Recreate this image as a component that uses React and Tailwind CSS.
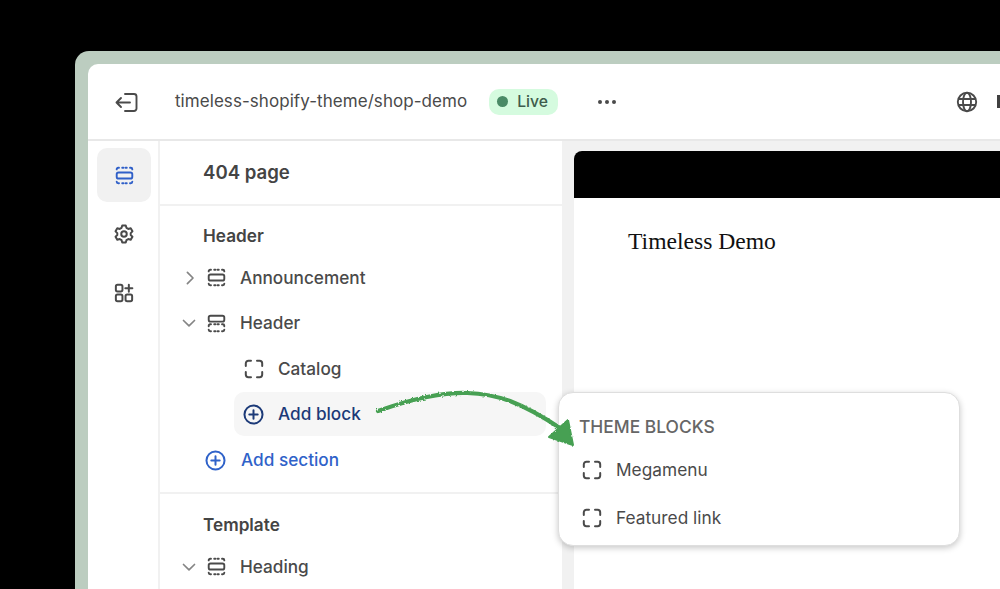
import React from 'react';

const font = { fontFamily: 'Inter, sans-serif' };

const SectionIcon = ({ className = 'text-[#4a4a4a]', size = 19 }) => (
    <svg width={size} height={size} viewBox="0 0 20 20" fill="none" stroke="currentColor" strokeWidth="2" strokeLinecap="round" className={className}>
        <rect x="1.8" y="6.8" width="16.4" height="6.4" rx="2" />
        <path d="M1.8 3.6V3.4A1.6 1.6 0 0 1 3.4 1.8H4.2M7.6 1.8H8.9M11.1 1.8H12.4M15.8 1.8H16.6A1.6 1.6 0 0 1 18.2 3.4V3.6" />
        <path d="M1.8 16.4V16.6A1.6 1.6 0 0 0 3.4 18.2H4.2M7.6 18.2H8.9M11.1 18.2H12.4M15.8 18.2H16.6A1.6 1.6 0 0 0 18.2 16.6V16.4" />
    </svg>
);

const HeaderIcon = () => (
    <svg width="19" height="19" viewBox="0 0 20 20" fill="none" stroke="#4a4a4a" strokeWidth="2" strokeLinecap="round">
        <rect x="1.8" y="1.8" width="16.4" height="6.2" rx="2" />
        <path d="M1.8 13V12.4A1.6 1.6 0 0 1 3.4 10.8H4.2M7.6 10.8H8.9M11.1 10.8H12.4M15.8 10.8H16.6A1.6 1.6 0 0 1 18.2 12.4V13" />
        <path d="M1.8 16.4V16.6A1.6 1.6 0 0 0 3.4 18.2H4.2M7.6 18.2H8.9M11.1 18.2H12.4M15.8 18.2H16.6A1.6 1.6 0 0 0 18.2 16.6V16.4" />
    </svg>
);

const BlockIcon = () => (
    <svg width="20" height="20" viewBox="0 0 20 20" fill="none" stroke="#4a4a4a" strokeWidth="2" strokeLinecap="round">
        <path d="M1.8 7V4.4A2.6 2.6 0 0 1 4.4 1.8H7M13 1.8H15.6A2.6 2.6 0 0 1 18.2 4.4V7" />
        <path d="M1.8 13V15.6A2.6 2.6 0 0 0 4.4 18.2H7M13 18.2H15.6A2.6 2.6 0 0 0 18.2 15.6V13" />
    </svg>
);

const PlusCircle = ({ color }) => (
    <svg width="21" height="21" viewBox="0 0 20 20" fill="none" stroke={color} strokeWidth="1.9" strokeLinecap="round">
        <circle cx="10" cy="10" r="8.6" />
        <path d="M10 6V14M6 10H14" />
    </svg>
);

const Chevron = ({ open }) => (
    <svg width="14" height="14" viewBox="0 0 14 14" fill="none" stroke="#858585" strokeWidth="1.7" strokeLinecap="round" strokeLinejoin="round">
        {open ? <path d="M1.5 4.5L7 9.8L12.5 4.5" /> : <path d="M5.4 1.4L11 7L5.4 12.6" />}
    </svg>
);

const Row = ({ open, icon, label }) => (
    <div className="h-[45.5px] flex items-center text-[17.2px] font-medium text-[#4a4a4a]">
        <div className="w-[19px] ml-[19px] flex justify-center"><Chevron open={open} /></div>
        <div className="w-[20px] ml-[8px] flex justify-center">{icon}</div>
        <span className="ml-[14px]">{label}</span>
    </div>
);

const App = () => {
    return (
        <div className="h-[589px] w-[1000px] overflow-hidden bg-black pl-[75px] pt-[51px] relative" style={font}>
            {/* Device frame */}
            <div className="w-[1000px] h-[600px] bg-[#bccdc0] rounded-tl-[14px] pl-[13px] pt-[13px]">
                <div className="h-full bg-white rounded-tl-[10px] flex flex-col overflow-hidden">
                    {/* Top bar */}
                    <div className="h-[77px] shrink-0 border-b-2 border-[#e8e8e8] flex items-center">
                        <svg className="ml-[26px]" width="24" height="24" viewBox="0 0 24 24" fill="none" stroke="#4a4a4a" strokeWidth="1.9" strokeLinecap="round" strokeLinejoin="round">
                            <path d="M11 4H20A2.5 2.5 0 0 1 22.5 6.5V18.5A2.5 2.5 0 0 1 20 21H11" />
                            <path d="M16 12.5H2.5M7 8L2.5 12.5L7 17" />
                        </svg>
                        <span className="ml-[37px] text-[17px] tracking-[0.06px] text-[#4a4a4a]">timeless-shopify-theme/shop-demo</span>
                        <div className="ml-[22px] h-[26px] w-[69px] rounded-[10px] bg-[#d5fbdf] flex items-center pl-[8px]">
                            <span className="w-[11px] h-[11px] rounded-full bg-[#4a8a66]" />
                            <span className="ml-[9px] text-[15.7px] font-medium text-[#3f5c4c]">Live</span>
                        </div>
                        <div className="ml-[40px] flex gap-[3px]">
                            <span className="w-[4px] h-[4px] rounded-full bg-[#4a4a4a]" />
                            <span className="w-[4px] h-[4px] rounded-full bg-[#4a4a4a]" />
                            <span className="w-[4px] h-[4px] rounded-full bg-[#4a4a4a]" />
                        </div>
                        <svg className="ml-[340px]" width="22" height="22" viewBox="0 0 22 22" fill="none" stroke="#4a4a4a" strokeWidth="1.9">
                            <circle cx="11" cy="11" r="9.2" />
                            <ellipse cx="11" cy="11" rx="4" ry="9.2" />
                            <path d="M2.4 8H19.6M2.4 14H19.6" />
                        </svg>
                        <span className="ml-[19px] w-[3px] h-[13px] bg-[#404040]" />
                    </div>

                    <div className="flex-1 flex min-h-0">
                        {/* Icon rail */}
                        <div className="w-[72px] shrink-0 border-r-2 border-[#f1f1f1] pl-[9px] pt-[7px] flex flex-col">
                            <div className="w-[54px] h-[54px] rounded-[10px] bg-[#f1f1f1] flex items-center justify-center">
                                <SectionIcon className="text-[#2f5fc8]" />
                            </div>
                            <div className="w-[54px] h-[59px] mt-[2px] flex items-center justify-center">
                                <svg width="22" height="22" viewBox="0 0 20 20" fill="none" stroke="#4a4a4a" strokeWidth="1.8" strokeLinejoin="round">
                                    <path d="M8.4 2.2H11.6L12.2 4.4L13.9 5.4L16.1 4.8L17.7 7.6L16.1 9.2V11L17.7 12.4L16.1 15.2L13.9 14.6L12.2 15.6L11.6 17.8H8.4L7.8 15.6L6.1 14.6L3.9 15.2L2.3 12.4L3.9 11V9.2L2.3 7.6L3.9 4.8L6.1 5.4L7.8 4.4Z" />
                                    <circle cx="10" cy="10" r="2.5" />
                                </svg>
                            </div>
                            <div className="w-[54px] h-[59px] flex items-center justify-center">
                                <svg width="22" height="22" viewBox="0 0 20 20" fill="none" stroke="#4a4a4a" strokeWidth="1.8" strokeLinecap="round">
                                    <rect x="2.6" y="2.6" width="6" height="6" rx="1.5" />
                                    <rect x="2.6" y="11.4" width="6" height="6" rx="1.5" />
                                    <rect x="11.4" y="11.4" width="6" height="6" rx="1.5" />
                                    <path d="M14.4 2.4V8.8M11.2 5.6H17.6" />
                                </svg>
                            </div>
                        </div>

                        {/* Section tree */}
                        <div className="w-[402px] shrink-0">
                            <div className="h-[65px] border-b-2 border-[#f1f1f1] flex items-center pl-[43px] text-[18.6px] font-semibold text-[#444]">404 page</div>
                            <div className="h-[288px] border-b-2 border-[#f1f1f1] pt-[11px]">
                                <div className="h-[38px] flex items-center pl-[43px] text-[17.2px] font-semibold text-[#444]">Header</div>
                                <Row icon={<SectionIcon />} label="Announcement" />
                                <Row open icon={<HeaderIcon />} label="Header" />
                                <div className="h-[46px] flex items-center text-[17.2px] font-medium text-[#4a4a4a] pl-[84px]">
                                    <BlockIcon />
                                    <span className="ml-[14px]">Catalog</span>
                                </div>
                                <div className="h-[44px] ml-[74px] mr-[16px] rounded-[10px] bg-[#f6f6f6] flex items-center pl-[9px] text-[17.2px] font-medium text-[#1c3a78]">
                                    <PlusCircle color="#1c3a78" />
                                    <span className="ml-[14px]">Add block</span>
                                </div>
                                <div className="h-[48px] flex items-center pl-[45px] text-[17.2px] font-medium text-[#2f62c9]">
                                    <PlusCircle color="#2f62c9" />
                                    <span className="ml-[15px]">Add section</span>
                                </div>
                            </div>
                            <div className="pt-[12px]">
                                <div className="h-[38px] flex items-center pl-[43px] text-[17.2px] font-semibold text-[#444]">Template</div>
                                <Row open icon={<SectionIcon />} label="Heading" />
                            </div>
                        </div>

                        {/* Preview */}
                        <div className="flex-1 bg-[#f1f1f1] pl-[12px] pt-[10px] min-w-0">
                            <div className="h-full bg-white rounded-tl-[8px] overflow-hidden">
                                <div className="h-[47px] bg-black" />
                                <p className="ml-[54px] mt-[27px] text-[23.6px] leading-[32px] text-[#111]" style={{ fontFamily: '"Liberation Serif", serif' }}>Timeless Demo</p>
                            </div>
                        </div>
                    </div>
                </div>
            </div>

            {/* Block picker popover */}
            <div className="absolute left-[557.5px] top-[391.5px] w-[402px] h-[154px] bg-white rounded-[15px] border border-[#dedede] shadow-[0_2px_6px_rgba(0,0,0,0.22)] pl-[20.5px] pt-[24.5px]">
                <div className="text-[17.4px] leading-[20px] font-medium text-[#666]">THEME BLOCKS</div>
                <div className="mt-[9px] h-[48px] flex items-center pl-[3px] text-[17.3px] text-[#4a4a4a]">
                    <BlockIcon />
                    <span className="ml-[14px]">Megamenu</span>
                </div>
                <div className="h-[48px] flex items-center pl-[3px] text-[17.3px] text-[#4a4a4a]">
                    <BlockIcon />
                    <span className="ml-[14px]">Featured link</span>
                </div>
            </div>

            {/* Hand drawn arrow */}
            <svg className="absolute left-0 top-0 pointer-events-none" width="1000" height="589" viewBox="0 0 1000 589" fill="none">
                <defs>
                    <filter id="rough" x="-5%" y="-5%" width="110%" height="110%">
                        <feTurbulence type="fractalNoise" baseFrequency="0.4" numOctaves="2" seed="4" />
                        <feDisplacementMap in="SourceGraphic" scale="3" />
                    </filter>
                </defs>
                <g filter="url(#rough)">
                    <path d="M378 411C395 405 410 400 427 397C445 393.5 455 392.5 467 393C482 393.5 496 396 510 401C528 408 545 418 560 428" stroke="#46a052" strokeWidth="4.2" strokeLinecap="round" />
                    <path d="M568 420L573 445L549 437Z" fill="#46a052" stroke="#46a052" strokeWidth="2" strokeLinejoin="round" />
                </g>
            </svg>
        </div>
    );
};

export default App;
